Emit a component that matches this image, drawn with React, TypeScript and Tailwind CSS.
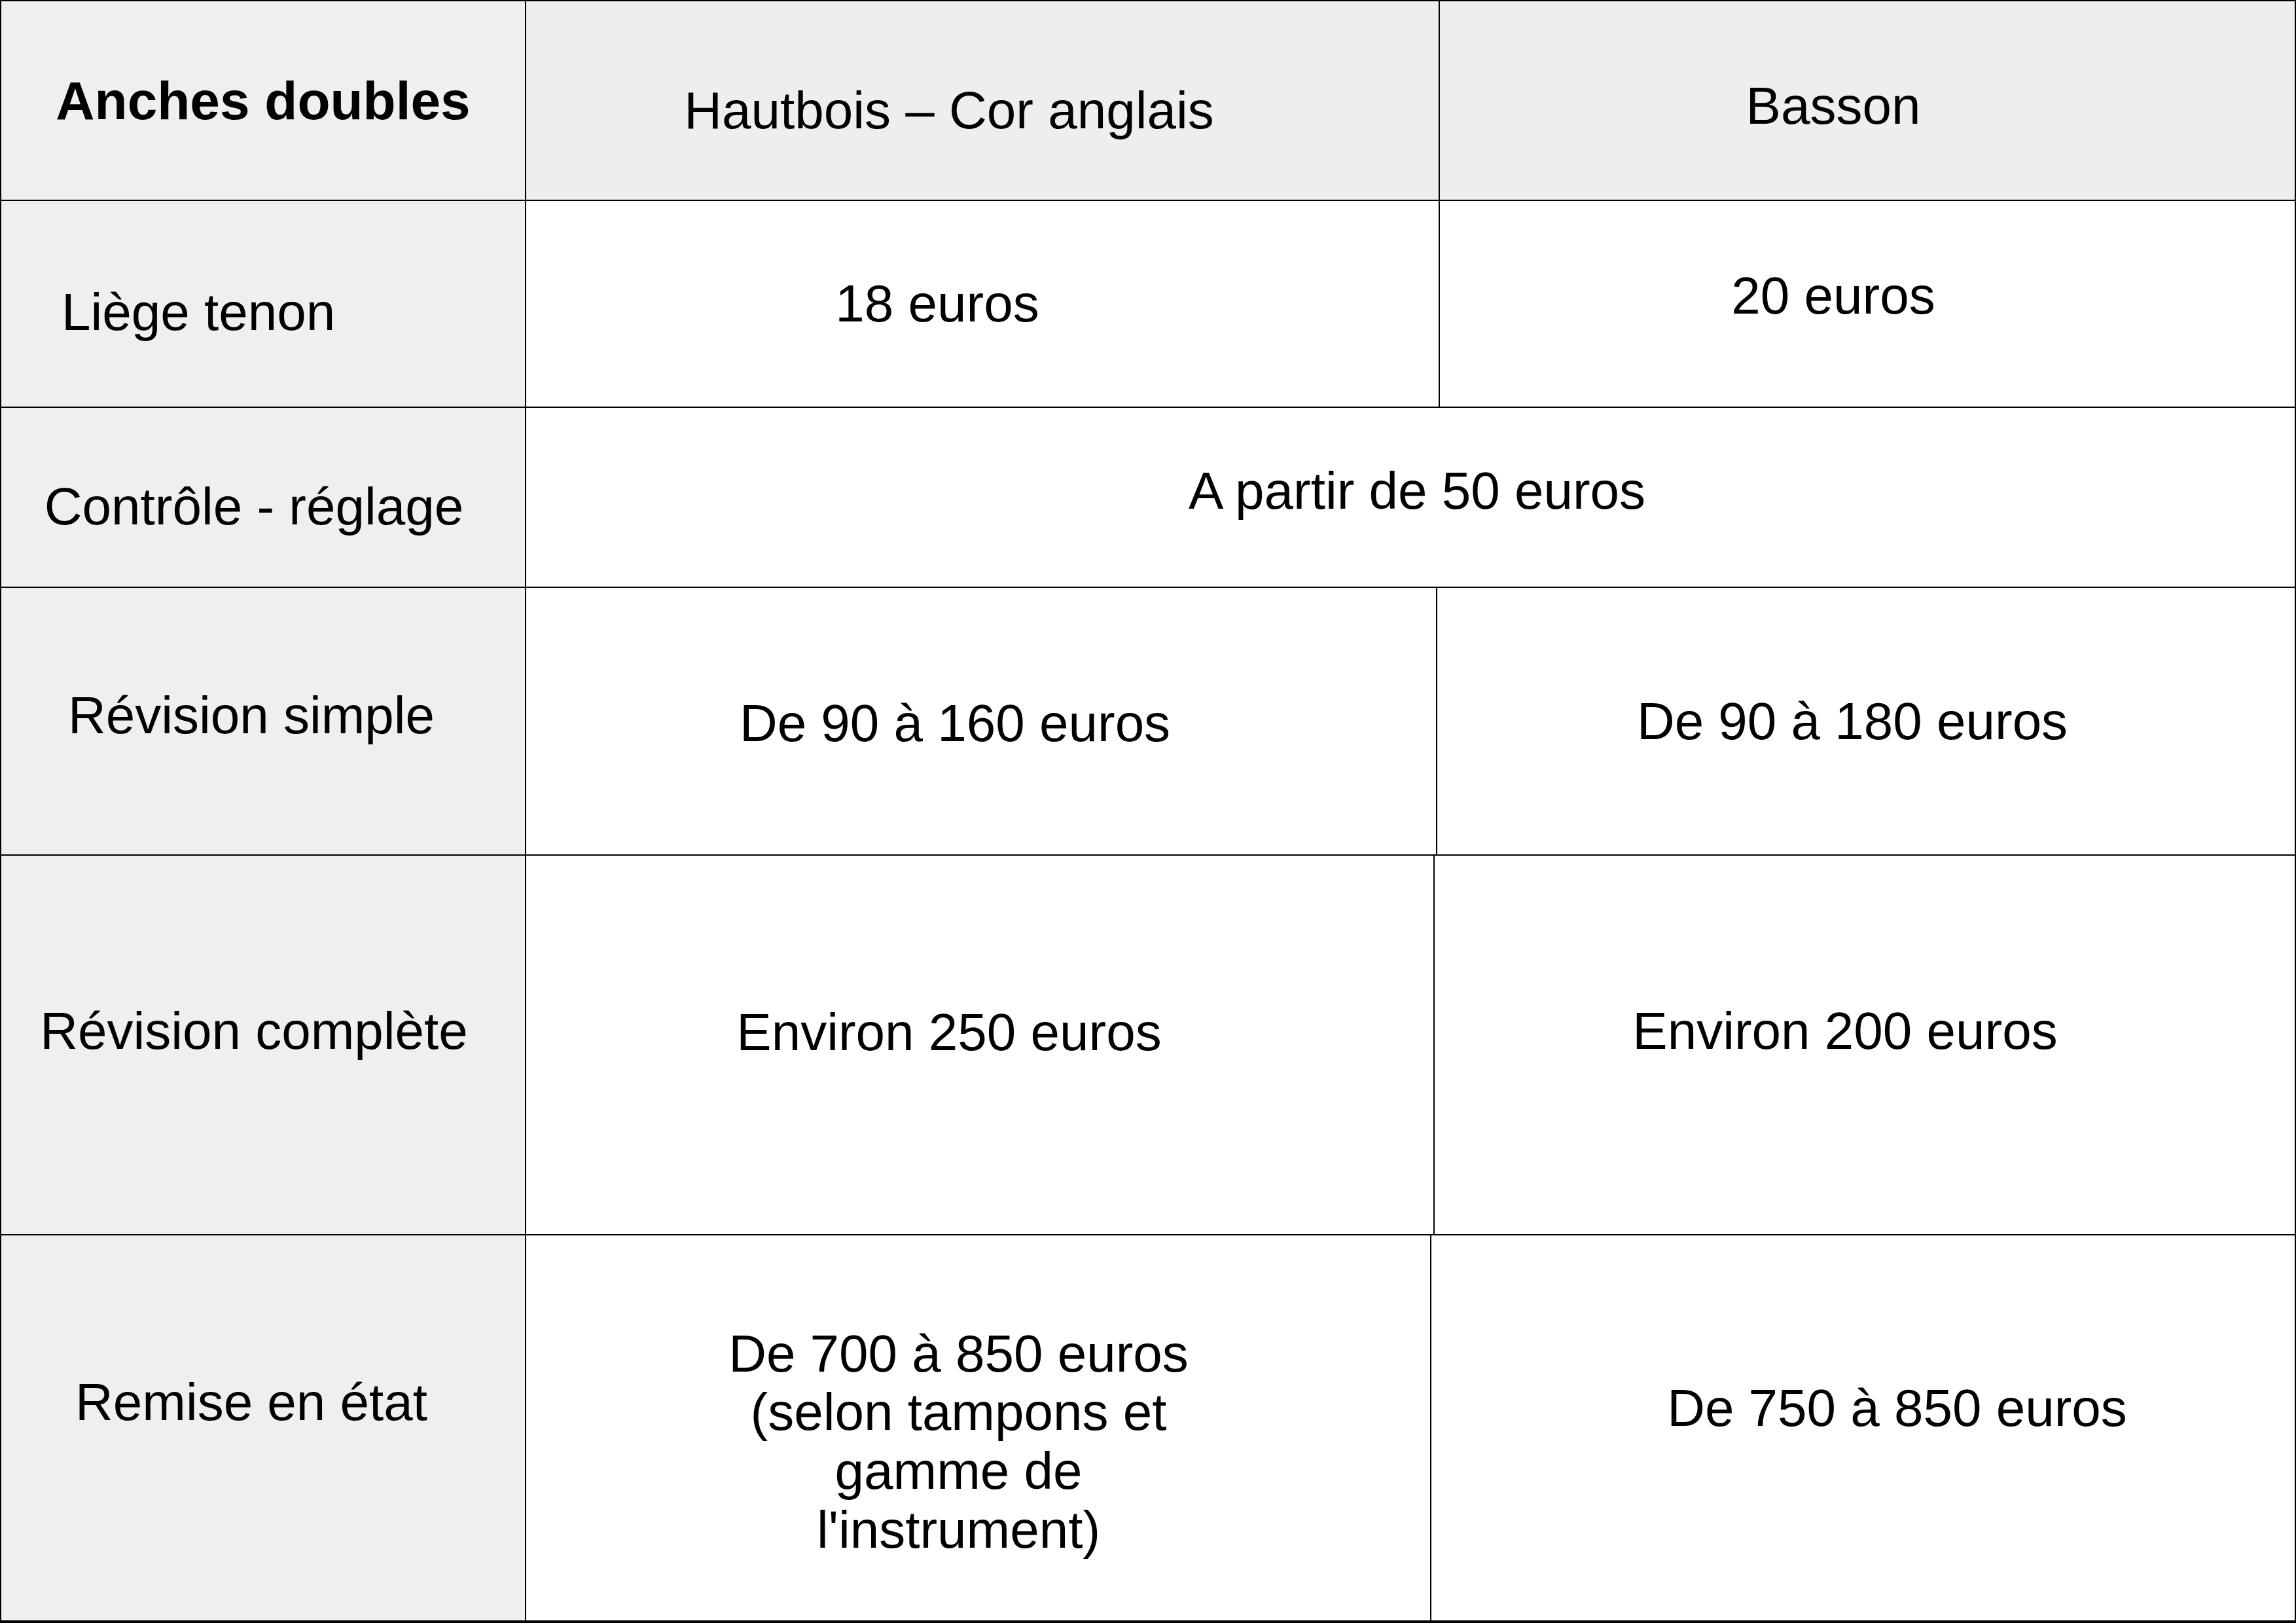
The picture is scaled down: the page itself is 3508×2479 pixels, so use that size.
import React from "react";

const font = "font-['Liberation_Sans',Arial,sans-serif]";

function Cell({
  className = "",
  children,
}: {
  className?: string;
  children: React.ReactNode;
}) {
  return (
    <div
      className={`flex items-center justify-center text-center text-[80px] leading-[1.12] text-black border-r-2 border-black ${className}`}
    >
      {children}
    </div>
  );
}

export default function App() {
  return (
    <div className={`w-[3508px] h-[2479px] bg-white ${font} flex flex-col border-l-2 border-t-2 border-black overflow-hidden`}>
      {/* En-tête */}
      <div className="grid grid-cols-[802px_1396px_1fr] h-[305px] border-b-2 border-black bg-[#eeeeee]">
        <Cell className="font-bold text-[82px] bg-[#efefef]">Anches doubles</Cell>
        <Cell className="pr-[102px] pt-[30px]">Hautbois – Cor anglais</Cell>
        <Cell className="pr-[104px] pt-[16px]">Basson</Cell>
      </div>

      {/* Liège tenon */}
      <div className="grid grid-cols-[802px_1396px_1fr] h-[316px] border-b-2 border-black">
        <Cell className="bg-[#efefef] justify-start pl-[92px] pt-[26px]">Liège tenon</Cell>
        <Cell className="pr-[138px]">18 euros</Cell>
        <Cell className="pr-[104px] pb-[24px]">20 euros</Cell>
      </div>

      {/* Contrôle - réglage */}
      <div className="grid grid-cols-[802px_1fr] h-[275px] border-b-2 border-black">
        <Cell className="bg-[#efefef] pr-[28px] pt-[28px]">Contrôle - réglage</Cell>
        <Cell className="pl-[20px] pb-[20px]">A partir de 50 euros</Cell>
      </div>

      {/* Révision simple */}
      <div className="grid grid-cols-[802px_1392px_1fr] h-[409px] border-b-2 border-black">
        <Cell className="bg-[#efefef] pr-[36px] pb-[18px]">Révision simple</Cell>
        <Cell className="pr-[80px] pt-[6px]">De 90 à 160 euros</Cell>
        <Cell className="pr-[42px]">De 90 à 180 euros</Cell>
      </div>

      {/* Révision complète */}
      <div className="grid grid-cols-[802px_1388px_1fr] h-[580px] border-b-2 border-black">
        <Cell className="bg-[#efefef] pr-[28px] pb-[42px]">Révision complète</Cell>
        <Cell className="pr-[94px] pb-[38px]">Environ 250 euros</Cell>
        <Cell className="pr-[60px] pb-[42px]">Environ 200 euros</Cell>
      </div>

      {/* Remise en état */}
      <div className="grid grid-cols-[802px_1383px_1fr] flex-1 border-b-4 border-black">
        <Cell className="bg-[#efefef] pr-[36px] pb-[78px]">Remise en état</Cell>
        <Cell className="pr-[60px] pt-[42px]">
          <span>
            De 700 à 850 euros
            <br />
            (selon tampons et
            <br />
            gamme de
            <br />
            l'instrument)
          </span>
        </Cell>
        <Cell className="pl-[104px] pb-[60px]">De 750 à 850 euros</Cell>
      </div>
    </div>
  );
}
